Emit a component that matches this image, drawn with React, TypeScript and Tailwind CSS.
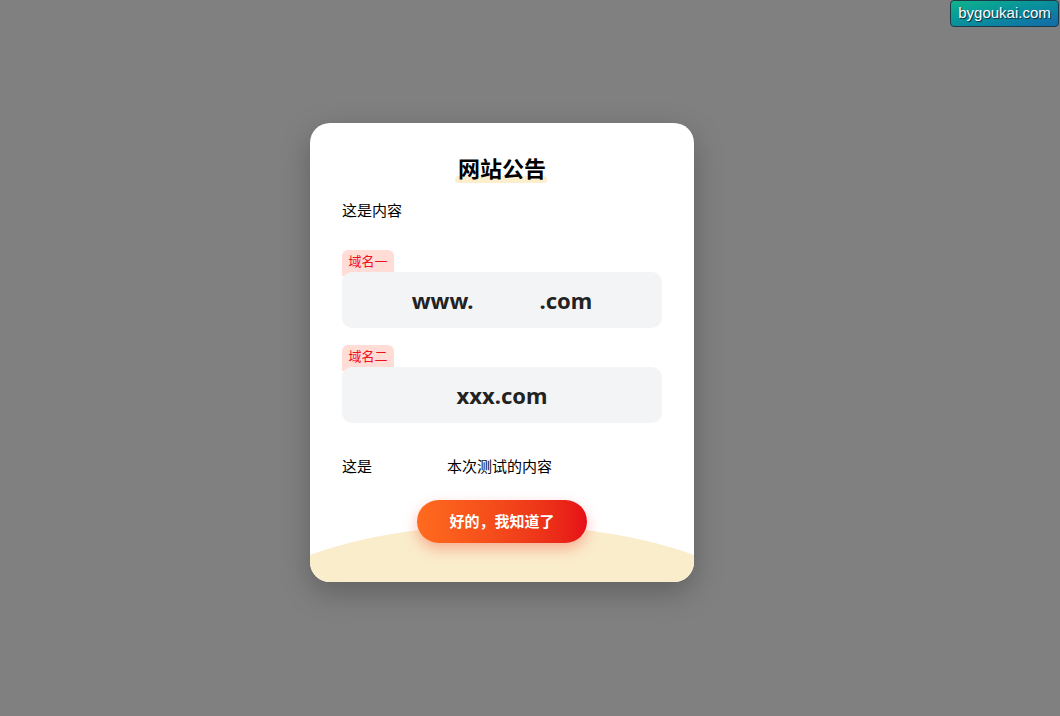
export default function App() {
  return (
    <div className="relative min-h-[716px] w-full bg-[#808080] font-['Noto_Sans','Noto_Sans_CJK_SC',sans-serif]">
      {/* watermark badge */}
      <div className="absolute right-[1px] top-0 flex h-[27px] w-[109px] items-center justify-center rounded-[4px] border border-[#1b3a48] bg-gradient-to-br from-[#12b48a] to-[#1668a8] font-['Liberation_Sans',sans-serif] text-[15px] text-white [text-shadow:1px_1px_1px_#123]">
        bygoukai.com
      </div>

      <div className="pl-[310px] pt-[123px]">
        <div className="relative w-[384px] overflow-hidden rounded-[20px] bg-white px-8 pb-[39px] pt-[29px] shadow-[0_10px_30px_rgba(0,0,0,0.25)]">
          {/* beige arc */}
          <div className="absolute left-[-108px] top-[402px] h-[258px] w-[600px] rounded-[50%] bg-[#faedcc]" />

          <div className="relative flex flex-col">
            <h2 className="flex justify-center">
              <span className="relative font-['Noto_Sans_CJK_SC',sans-serif] text-[22px] font-bold leading-[30px] text-black">
                <span className="absolute bottom-[-1px] left-[-3px] right-[-1px] h-[7px] rounded-[4px] bg-[#fdefcc]" />
                <span className="relative">网站公告</span>
              </span>
            </h2>

            <p className="mt-[18px] font-['Noto_Sans_CJK_SC',sans-serif] text-[15px] leading-[20px] text-black">这是内容</p>

            <div className="mt-[30px] flex flex-col">
              <span className="-mb-[4px] w-[52px] rounded-t-[6px] bg-[#ffdcd6] pb-[4px] text-center font-['Noto_Sans_CJK_SC',sans-serif] text-[13px] leading-[22px] text-[#f0101a]">
                域名一
              </span>
              <div className="relative flex h-[56px] items-center justify-center rounded-[10px] bg-[#f3f4f6] text-[22px] font-bold text-[#222]">
                www.<span className="inline-block w-[66px]" />.com
              </div>
            </div>

            <div className="mt-[17px] flex flex-col">
              <span className="-mb-[4px] w-[52px] rounded-t-[6px] bg-[#ffdcd6] pb-[4px] text-center font-['Noto_Sans_CJK_SC',sans-serif] text-[13px] leading-[22px] text-[#f0101a]">
                域名二
              </span>
              <div className="relative flex h-[56px] items-center justify-center rounded-[10px] bg-[#f3f4f6] text-[22px] font-bold text-[#222]">
                xxx.com
              </div>
            </div>

            <p className="mt-[33px] flex font-['Noto_Sans_CJK_SC',sans-serif] text-[15px] leading-[20px] text-black">
              <span className="w-[105px]">这是</span>
              <span>本次测试的内容</span>
            </p>

            <div className="mt-[24px] flex justify-center">
              <button className="h-[43px] w-[170px] rounded-full bg-gradient-to-r from-[#ff6b1e] to-[#e60d17] font-['Noto_Sans_CJK_SC',sans-serif] text-[15px] font-bold text-white shadow-[0_6px_14px_rgba(240,60,40,0.35)]">
                好的，我知道了
              </button>
            </div>
          </div>
        </div>
      </div>
    </div>
  );
}
